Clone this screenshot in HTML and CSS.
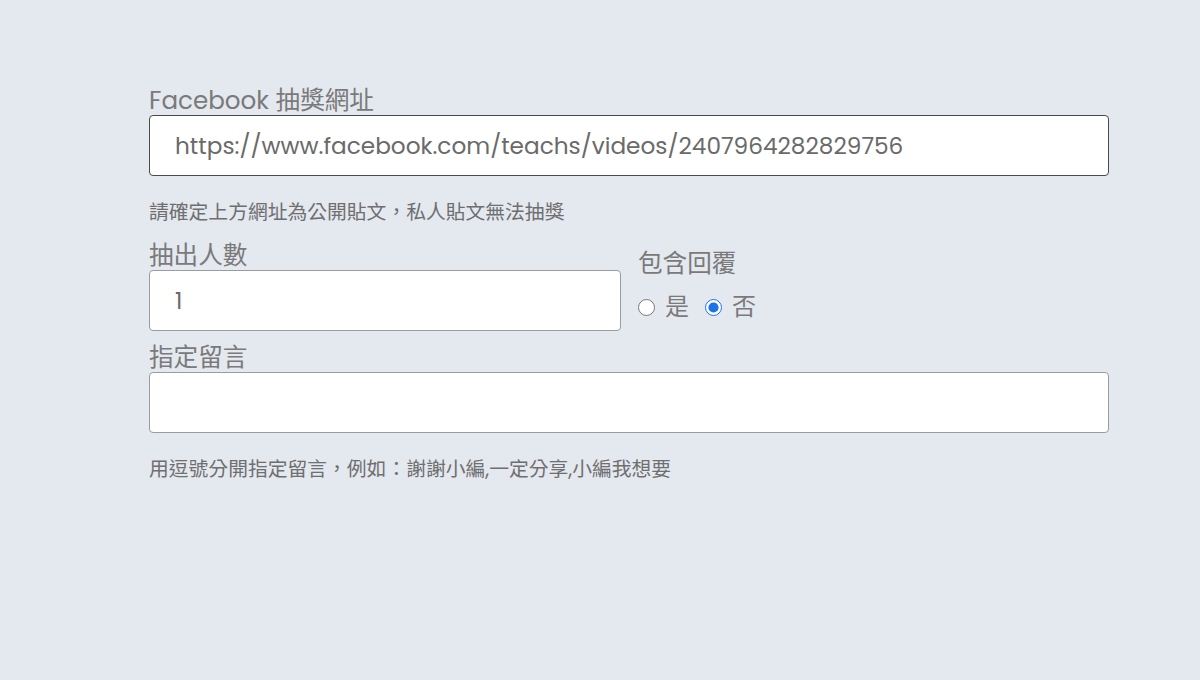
FILE: index.html
```html
<!DOCTYPE html>
<html lang="zh-Hant">
<head>
<meta charset="utf-8">
<title>Facebook 抽獎</title>
<link rel="stylesheet" href="styles.css">
</head>
<body>
<form class="form">
  <label class="label" for="url">Facebook 抽獎網址</label>
  <input class="field field-focus" id="url" type="text" value="https://www.facebook.com/teachs/videos/2407964282829756">
  <p class="help help-first">請確定上方網址為公開貼文，私人貼文無法抽獎</p>
  <div class="row">
    <div class="col-count">
      <label class="label" for="count">抽出人數</label>
      <input class="field" id="count" type="text" value="1">
    </div>
    <div class="col-reply">
      <div class="label">包含回覆</div>
      <div class="radios">
        <label class="radio"><input type="radio" name="reply" value="yes"><span>是</span></label>
        <label class="radio"><input type="radio" name="reply" value="no" checked><span>否</span></label>
      </div>
    </div>
  </div>
  <label class="label label-comment" for="comment">指定留言</label>
  <input class="field" id="comment" type="text" value="">
  <p class="help">用逗號分開指定留言，例如：謝謝小編,一定分享,小編我想要</p>
</form>
</body>
</html>
```
FILE: styles.css
```css
html, body {
  margin: 0;
  padding: 0;
  background: #e4e8ef;
}
body {
  font-family: "Poppins", "Inter", "Noto Sans CJK TC", sans-serif;
  color: #777777;
}
.form {
  width: 960px;
  padding: 87px 0 0 149px;
  margin: 0;
}
.label {
  display: block;
  font-size: 24.6px;
  line-height: 28px;
  color: #7a7a7a;
}
.field {
  display: block;
  box-sizing: border-box;
  width: 100%;
  height: 61px;
  margin: 0;
  padding: 0 25px;
  border: 1px solid #9a9ca0;
  border-radius: 4px;
  background: #ffffff;
  font-family: inherit;
  font-size: 23.2px;
  color: #6a6a6a;
  outline: none;
}
.field-focus {
  border-color: #4a4a4a;
}
.help {
  margin: 24px 0 0 0;
  font-size: 19.8px;
  line-height: 24px;
  color: #6f6f6f;
}
.help-first {
  margin-bottom: 18px;
}
.row {
  display: flex;
  gap: 17px;
}
.col-count {
  width: 472px;
}
.col-reply {
  padding-top: 8px;
}
.radios {
  display: flex;
  align-items: center;
  gap: 16px;
  margin-top: 15px;
}
.radio {
  display: flex;
  align-items: center;
  gap: 10px;
  font-size: 24px;
  line-height: 28px;
  color: #7a7a7a;
}
.radio input {
  width: 17px;
  height: 17px;
  margin: 0;
  accent-color: #1a73e8;
}
.label-comment {
  margin-top: 13px;
}
```
